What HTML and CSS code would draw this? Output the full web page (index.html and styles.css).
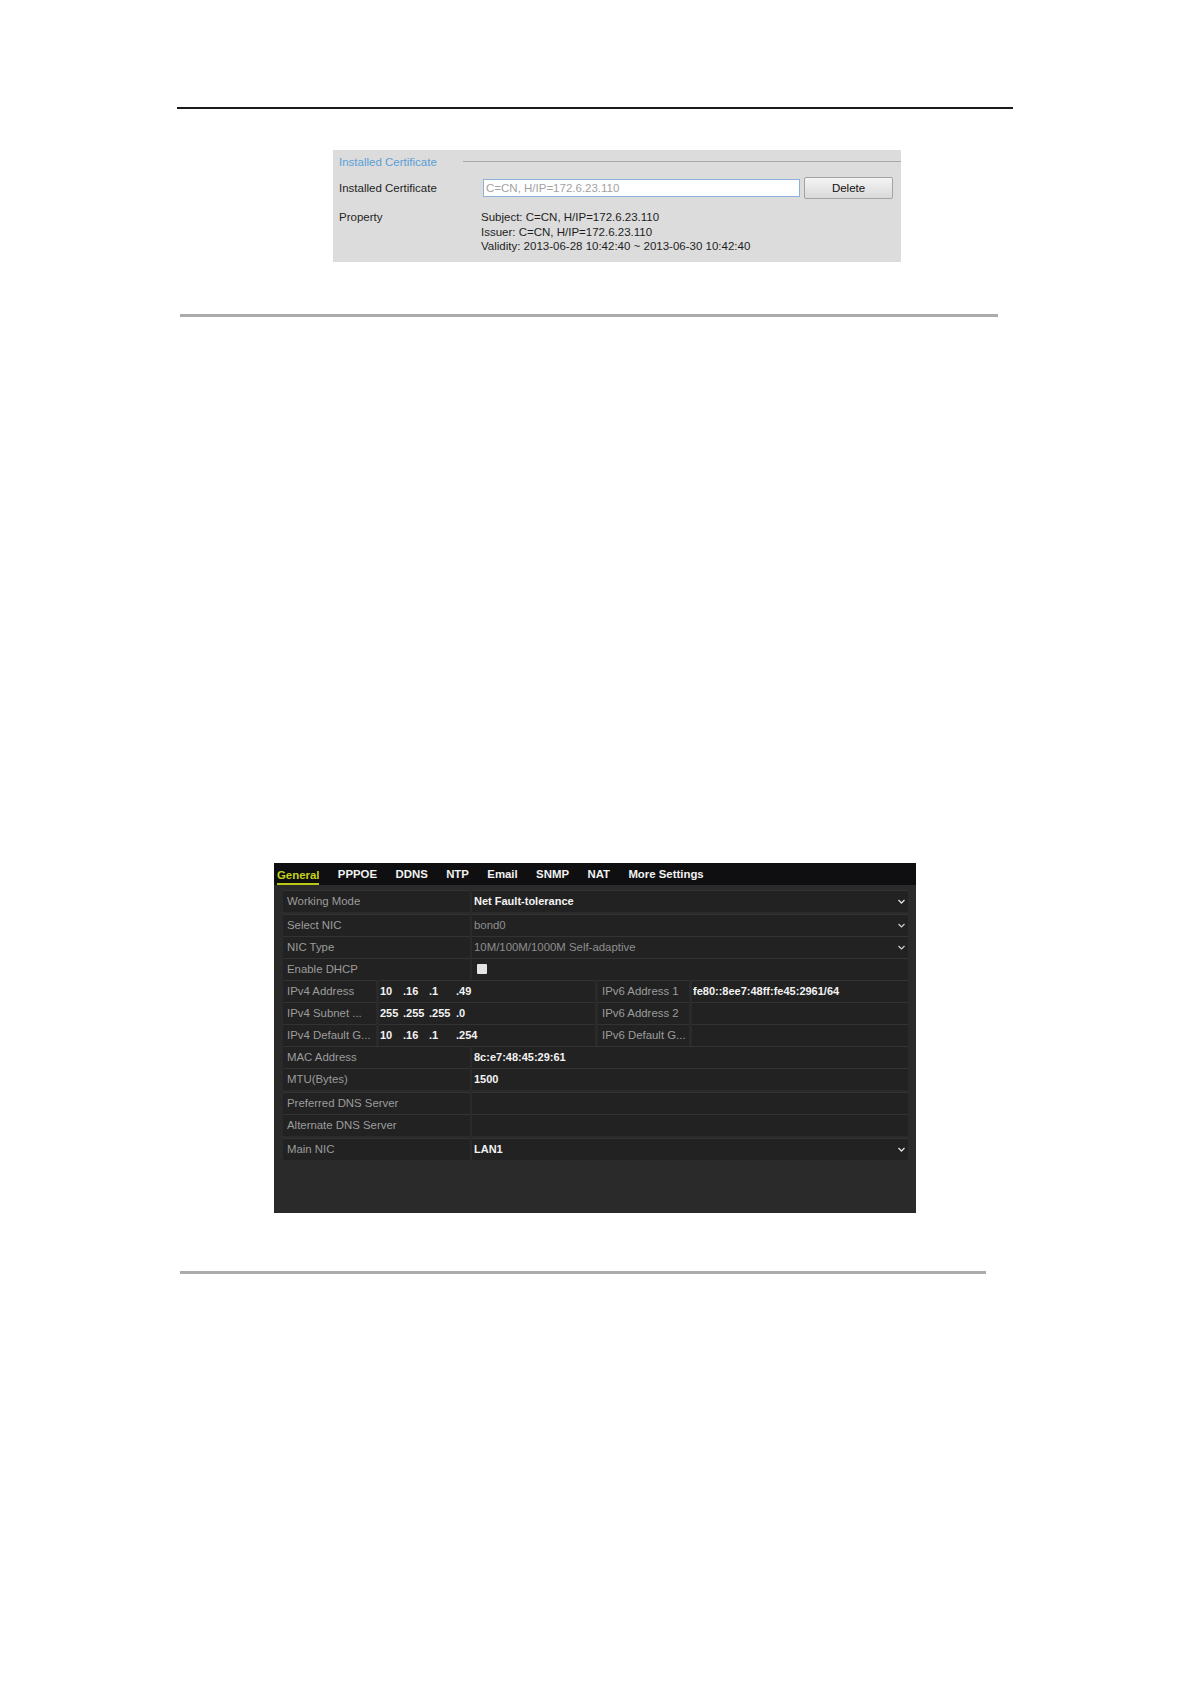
FILE: index.html
```html
<!DOCTYPE html>
<html lang="en">
<head>
<meta charset="utf-8">
<title>Network Settings</title>
<link rel="stylesheet" href="styles.css">
</head>
<body>
<div class="page">
  <div class="rule-top"></div>

  <section class="cert">
    <div class="cert-title">
      <span class="cert-title-text">Installed Certificate</span>
      <span class="cert-title-line"></span>
    </div>
    <div class="cert-row">
      <span class="cert-label">Installed Certificate</span>
      <div class="cert-input">C=CN, H/IP=172.6.23.110</div>
      <button class="cert-btn">Delete</button>
    </div>
    <div class="cert-prop">
      <span class="cert-label">Property</span>
      <div class="cert-values">
        <div>Subject: C=CN, H/IP=172.6.23.110</div>
        <div>Issuer: C=CN, H/IP=172.6.23.110</div>
        <div>Validity: 2013-06-28 10:42:40 ~ 2013-06-30 10:42:40</div>
      </div>
    </div>
  </section>

  <div class="rule"></div>

  <section class="dvr">
    <nav class="tabs">
      <span class="tab active">General</span>
      <span class="tab">PPPOE</span>
      <span class="tab">DDNS</span>
      <span class="tab">NTP</span>
      <span class="tab">Email</span>
      <span class="tab">SNMP</span>
      <span class="tab">NAT</span>
      <span class="tab">More Settings</span>
    </nav>
    <div class="form">
      <div class="group">
        <div class="row">
          <div class="cell lbl">Working Mode</div>
          <div class="cell val strong">Net Fault-tolerance<svg class="arrow" width="7" height="5" viewBox="0 0 7 5"><path d="M0.5 1 L3.5 4 L6.5 1" fill="none" stroke="#e0e0e0" stroke-width="1.3"/></svg></div>
        </div>
      </div>
      <div class="group">
        <div class="row">
          <div class="cell lbl">Select NIC</div>
          <div class="cell val dim">bond0<svg class="arrow" width="7" height="5" viewBox="0 0 7 5"><path d="M0.5 1 L3.5 4 L6.5 1" fill="none" stroke="#cfcfcf" stroke-width="1.2"/></svg></div>
        </div>
        <div class="row">
          <div class="cell lbl">NIC Type</div>
          <div class="cell val dim">10M/100M/1000M Self-adaptive<svg class="arrow" width="7" height="5" viewBox="0 0 7 5"><path d="M0.5 1 L3.5 4 L6.5 1" fill="none" stroke="#cfcfcf" stroke-width="1.2"/></svg></div>
        </div>
        <div class="row">
          <div class="cell lbl">Enable DHCP</div>
          <div class="cell val"><span class="check"></span></div>
        </div>
        <div class="row quad">
          <div class="cell lbl">IPv4 Address</div>
          <div class="cell ipval strong"><span class="oct o1">10</span><span class="oct o2">.16</span><span class="oct o3">.1</span><span class="oct">.49</span></div>
          <div class="cell lbl">IPv6 Address 1</div>
          <div class="cell ipval strong">fe80::8ee7:48ff:fe45:2961/64</div>
        </div>
        <div class="row quad">
          <div class="cell lbl">IPv4 Subnet ...</div>
          <div class="cell ipval strong"><span class="oct o1">255</span><span class="oct o2">.255</span><span class="oct o3">.255</span><span class="oct">.0</span></div>
          <div class="cell lbl">IPv6 Address 2</div>
          <div class="cell ipval"></div>
        </div>
        <div class="row quad">
          <div class="cell lbl">IPv4 Default G...</div>
          <div class="cell ipval strong"><span class="oct o1">10</span><span class="oct o2">.16</span><span class="oct o3">.1</span><span class="oct">.254</span></div>
          <div class="cell lbl">IPv6 Default G...</div>
          <div class="cell ipval"></div>
        </div>
        <div class="row">
          <div class="cell lbl">MAC Address</div>
          <div class="cell val strong">8c:e7:48:45:29:61</div>
        </div>
        <div class="row">
          <div class="cell lbl">MTU(Bytes)</div>
          <div class="cell val strong">1500</div>
        </div>
      </div>
      <div class="group">
        <div class="row">
          <div class="cell lbl">Preferred DNS Server</div>
          <div class="cell val"></div>
        </div>
        <div class="row">
          <div class="cell lbl">Alternate DNS Server</div>
          <div class="cell val"></div>
        </div>
      </div>
      <div class="group">
        <div class="row">
          <div class="cell lbl">Main NIC</div>
          <div class="cell val strong">LAN1<svg class="arrow" width="7" height="5" viewBox="0 0 7 5"><path d="M0.5 1 L3.5 4 L6.5 1" fill="none" stroke="#e0e0e0" stroke-width="1.3"/></svg></div>
        </div>
      </div>
    </div>
  </section>

  <div class="rule rule-last"></div>
</div>
</body>
</html>
```

FILE: styles.css
```css
html, body {
  margin: 0;
  padding: 0;
  background: #ffffff;
}

.page {
  width: 1191px;
  min-height: 1684px;
  font-family: "Liberation Sans", Arial, sans-serif;
  display: flex;
  flex-direction: column;
  align-items: flex-start;
}

.rule-top {
  margin: 107px 0 0 177px;
  width: 836px;
  height: 2px;
  background: #1a1a1a;
}

/* ---------- certificate panel ---------- */
.cert {
  margin: 41px 0 0 333px;
  width: 568px;
  height: 112px;
  box-sizing: border-box;
  padding: 0 8px 0 6px;
  background: #dcdcdc;
  font-size: 11.5px;
  color: #1e1e1e;
}

.cert-title {
  height: 24px;
  display: flex;
  align-items: center;
}

.cert-title-text {
  color: #5a9fd6;
}

.cert-title-line {
  flex: 1;
  height: 1px;
  margin: 0 -8px 1px 26px;
  background: #a9a9a9;
}

.cert-row {
  height: 24px;
  margin-top: 2px;
  display: flex;
  align-items: center;
}

.cert-label {
  width: 144px;
  flex: none;
}

.cert-input {
  width: 317px;
  height: 18px;
  box-sizing: border-box;
  border: 1px solid #8fb0d6;
  background: #ffffff;
  color: #a2a2a2;
  line-height: 16px;
  padding-left: 2px;
}

.cert-btn {
  margin-left: 4px;
  width: 89px;
  height: 22px;
  border: 1px solid #a3a3a3;
  border-radius: 2px;
  background: linear-gradient(#f4f4f4, #d9d9d9);
  font-family: "Liberation Sans", Arial, sans-serif;
  font-size: 11.5px;
  color: #111;
  padding: 0;
}

.cert-prop {
  display: flex;
  padding-top: 10px;
  line-height: 14.5px;
}

.cert-values {
  margin-left: -2px;
}

.rule {
  margin: 52px 0 0 180px;
  width: 818px;
  height: 3px;
  background: #ababab;
}

.rule-last {
  margin-top: 58px;
  width: 806px;
}

/* ---------- DVR network panel ---------- */
.dvr {
  margin: 546px 0 0 274px;
  width: 642px;
  height: 350px;
  background: #2a2a2a;
  font-family: "Liberation Sans", Arial, sans-serif;
}

.tabs {
  height: 22px;
  background: #0f0f11;
  display: flex;
  align-items: center;
  gap: 18.4px;
  padding-left: 3px;
}

.tab {
  font-size: 11.4px;
  font-weight: bold;
  color: #f2f2f2;
  line-height: 22px;
}

.tab.active {
  color: #c6d21c;
  box-shadow: inset 0 -2px 0 #b8c814;
  line-height: 20px;
  padding-top: 1px;
}

.form {
  padding: 5px 8px 0 9px;
}

.group + .group {
  margin-top: 2px;
}

.row {
  display: grid;
  grid-template-columns: 187px 1fr;
  column-gap: 2px;
  height: 22px;
}

.row.quad {
  grid-template-columns: 93px 216px 91px 1fr;
  column-gap: 3px;
}

.cell {
  background: #222222;
  box-shadow: inset 0 1px 0 #333333;
  display: flex;
  align-items: center;
  font-size: 11.4px;
  white-space: nowrap;
  overflow: hidden;
}

.lbl {
  color: #9c9c9c;
  padding-left: 4px;
}

.val {
  padding: 0 2px 0 2px;
  justify-content: space-between;
}

.ipval {
  padding-left: 1px;
}

.strong {
  color: #f3f3f3;
  font-weight: bold;
  font-size: 11px;
}

.dim {
  color: #8e8e8e;
}

.arrow {
  flex: none;
  margin-right: 1px;
}

.oct {
  display: inline-block;
}

.o1 { width: 23px; }
.o2 { width: 26px; }
.o3 { width: 27px; }

.check {
  width: 10px;
  height: 10px;
  margin-left: 3px;
  background: #e4e4e4;
  border-radius: 1px;
}
```
